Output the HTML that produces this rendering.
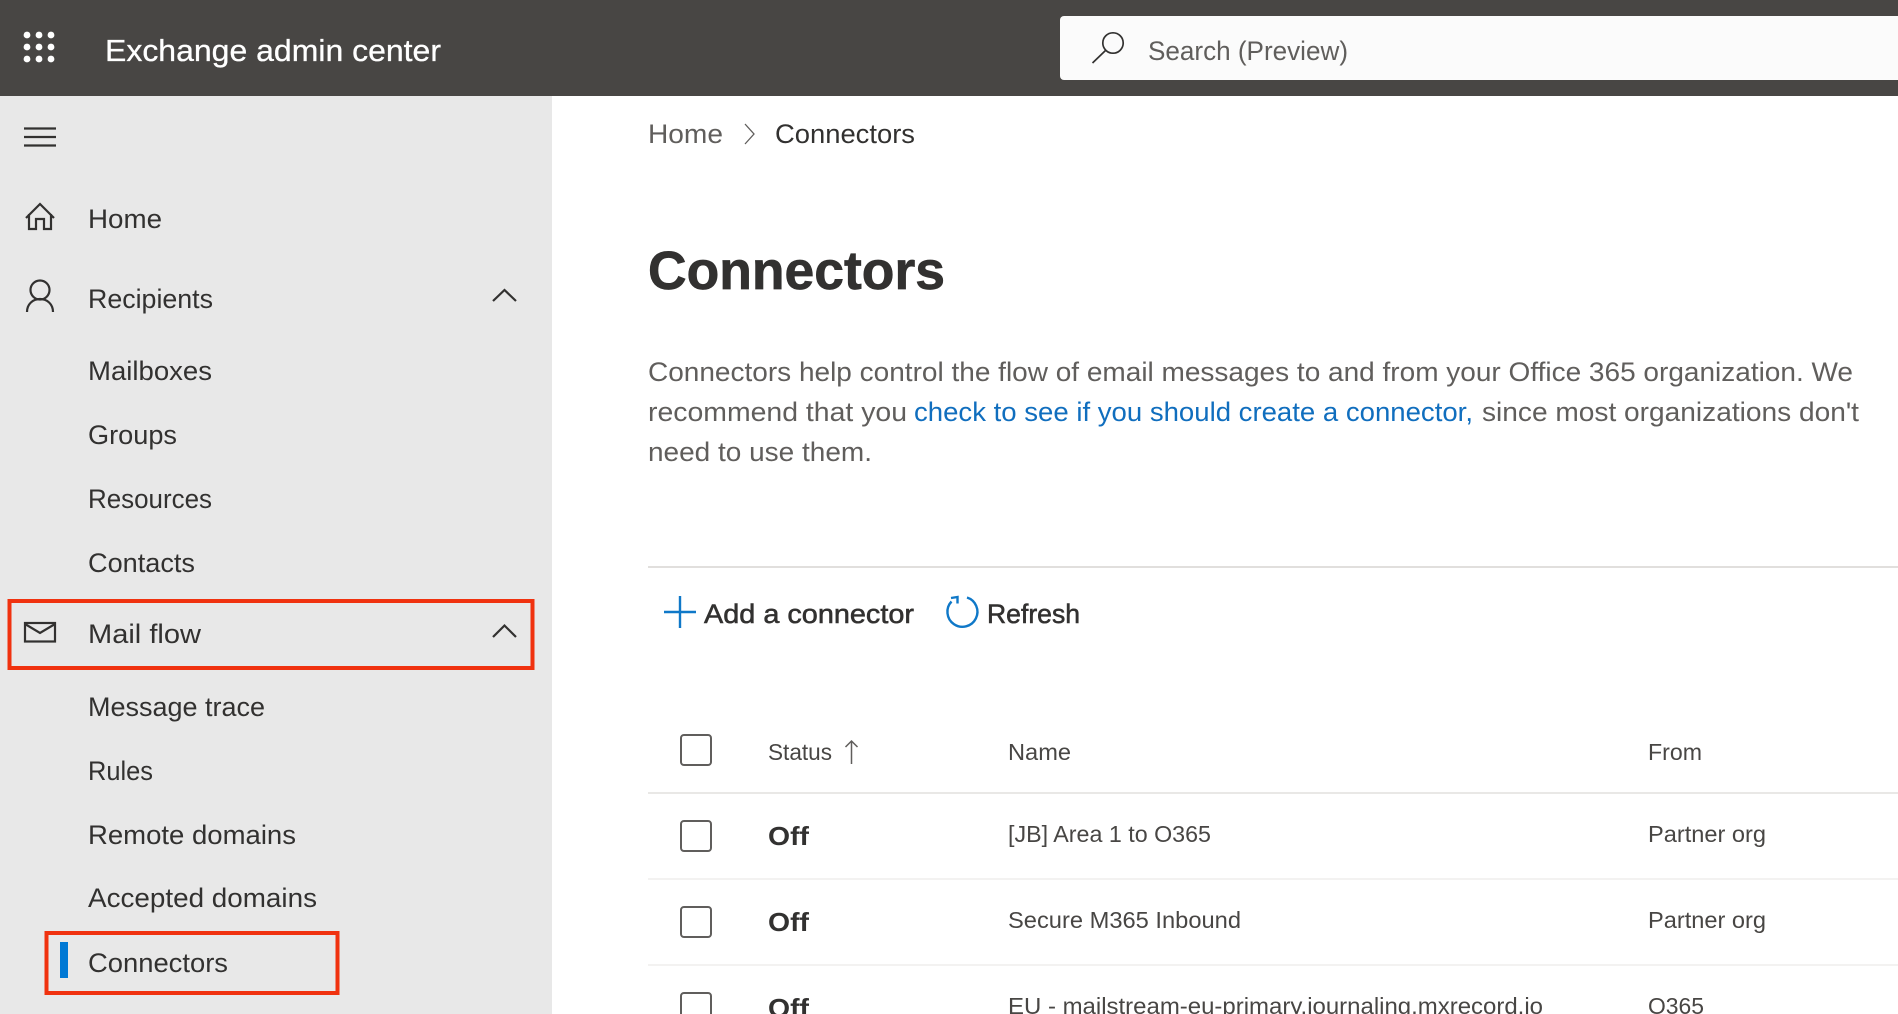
<!DOCTYPE html>
<html lang="en">
<head>
<meta charset="utf-8">
<title>Exchange admin center - Connectors</title>
<style>
html,body{margin:0;padding:0;width:1898px;height:1014px;overflow:hidden;background:#fff}
svg{display:block;position:absolute;left:0;top:0}
text{font-family:"Liberation Sans",sans-serif;white-space:pre}
.nav{font-size:27px;fill:#323130}
.p{font-size:27px;fill:#605e5c}
.l{font-size:27px;fill:#106ebe}
.t{font-size:23.5px;fill:#484644}
.h{font-size:23.5px;fill:#484644}
.off{font-size:26px;font-weight:bold;fill:#323130}
.btn{font-size:27px;fill:#323130;stroke:#323130;stroke-width:.55px}
.i{fill:none;stroke:#323130;stroke-width:2.2}
.b{fill:none;stroke:#0f78c8;stroke-width:2.4}
.cb{fill:#fff;stroke:#605e5c;stroke-width:2}
</style>
</head>
<body>
<svg width="1898" height="1014" viewBox="0 0 1898 1014" xmlns="http://www.w3.org/2000/svg">
<rect width="1898" height="1014" fill="#fff"/>
<!-- top bar -->
<rect width="1898" height="96" fill="#484644"/>
<g fill="#fff">
<circle cx="27" cy="35" r="3.4"/><circle cx="39" cy="35" r="3.4"/><circle cx="51" cy="35" r="3.4"/>
<circle cx="27" cy="47" r="3.4"/><circle cx="39" cy="47" r="3.4"/><circle cx="51" cy="47" r="3.4"/>
<circle cx="27" cy="59" r="3.4"/><circle cx="39" cy="59" r="3.4"/><circle cx="51" cy="59" r="3.4"/>
</g>
<text x="105" y="61" font-size="30.5" fill="#fff" stroke="#fff" stroke-width=".3" textLength="336" lengthAdjust="spacingAndGlyphs">Exchange admin center</text>
<path d="M1064 16H1898V80H1064A4 4 0 0 1 1060 76V20A4 4 0 0 1 1064 16Z" fill="#fbfbfb"/>
<circle cx="1113" cy="43" r="10.2" fill="none" stroke="#323130" stroke-width="1.7"/>
<path d="M1105.5 50.5L1092.500 63" fill="none" stroke="#323130" stroke-width="1.7"/>
<text x="1148" y="60" font-size="27" fill="#605e5c" textLength="200" lengthAdjust="spacingAndGlyphs">Search (Preview)</text>
<!-- sidebar -->
<rect y="96" width="552" height="918" fill="#e8e8e8"/>
<path d="M24 128.500H56M24 137H56M24 145.500H56" class="i"/>
<path d="M26 218L40 204L54 218M29 214V229H36V219H44V229H51V214" class="i"/>
<circle cx="40" cy="290" r="9.5" class="i"/>
<path d="M27 312C27 304 33 299 40 299C47 299 53 304 53 312" class="i"/>
<path d="M493 301L504.500 290L516 301" class="i"/>
<path d="M493 637L504.500 625.500L516 637" class="i"/>
<rect x="25" y="623" width="30" height="18.500" class="i"/>
<path d="M25 624L40 633L55 624" class="i"/>
<text class="nav" x="88" y="228" textLength="74" lengthAdjust="spacingAndGlyphs">Home</text>
<text class="nav" x="88" y="308" textLength="125" lengthAdjust="spacingAndGlyphs">Recipients</text>
<text class="nav" x="88" y="380" textLength="124" lengthAdjust="spacingAndGlyphs">Mailboxes</text>
<text class="nav" x="88" y="444" textLength="89" lengthAdjust="spacingAndGlyphs">Groups</text>
<text class="nav" x="88" y="508" textLength="124" lengthAdjust="spacingAndGlyphs">Resources</text>
<text class="nav" x="88" y="572" textLength="107" lengthAdjust="spacingAndGlyphs">Contacts</text>
<text class="nav" x="88" y="643" textLength="113" lengthAdjust="spacingAndGlyphs">Mail flow</text>
<text class="nav" x="88" y="716" textLength="177" lengthAdjust="spacingAndGlyphs">Message trace</text>
<text class="nav" x="88" y="780" textLength="65" lengthAdjust="spacingAndGlyphs">Rules</text>
<text class="nav" x="88" y="844" textLength="208" lengthAdjust="spacingAndGlyphs">Remote domains</text>
<text class="nav" x="88" y="907" textLength="229" lengthAdjust="spacingAndGlyphs">Accepted domains</text>
<text class="nav" x="88" y="972" textLength="140" lengthAdjust="spacingAndGlyphs">Connectors</text>
<rect x="60" y="942" width="8" height="36" fill="#0078d4"/>
<rect x="9.500" y="601" width="523" height="67" fill="none" stroke="#f0320f" stroke-width="4"/>
<rect x="46.500" y="933" width="291" height="60" fill="none" stroke="#f0320f" stroke-width="4"/>
<!-- breadcrumb -->
<text x="648" y="143" font-size="27" fill="#605e5c" textLength="75" lengthAdjust="spacingAndGlyphs">Home</text>
<path d="M745 124L754 134L745 144" fill="none" stroke="#605e5c" stroke-width="1.300"/>
<text x="775" y="143" font-size="27" fill="#323130" textLength="140" lengthAdjust="spacingAndGlyphs">Connectors</text>
<!-- heading -->
<text x="648" y="289" font-size="54" font-weight="bold" fill="#323130" stroke="#323130" stroke-width=".7" textLength="297" lengthAdjust="spacingAndGlyphs">Connectors</text>
<!-- paragraph -->
<text class="p" x="648" y="381" textLength="1205" lengthAdjust="spacingAndGlyphs">Connectors help control the flow of email messages to and from your Office 365 organization. We</text>
<text class="p" x="648" y="421" textLength="259" lengthAdjust="spacingAndGlyphs">recommend that you</text>
<text class="l" x="914" y="421" textLength="559" lengthAdjust="spacingAndGlyphs">check to see if you should create a connector,</text>
<text class="p" x="1482" y="421" textLength="377" lengthAdjust="spacingAndGlyphs">since most organizations don't</text>
<text class="p" x="648" y="461" textLength="224" lengthAdjust="spacingAndGlyphs">need to use them.</text>
<rect x="648" y="566" width="1250" height="2" fill="#e1dfdd"/>
<!-- toolbar -->
<path d="M664 612H696M680 596V628" class="b"/>
<text class="btn" x="704" y="623" textLength="210" lengthAdjust="spacingAndGlyphs">Add a connector</text>
<path d="M967 597.500A15 15 0 1 1 951.500 601.500" class="b"/>
<path d="M951 598L957.500 597L957.500 603.500" class="b"/>
<text class="btn" x="987" y="623" textLength="93" lengthAdjust="spacingAndGlyphs">Refresh</text>
<!-- table -->
<rect x="681" y="735" width="30" height="30" rx="3" class="cb"/>
<text class="h" x="768" y="760" textLength="64" lengthAdjust="spacingAndGlyphs">Status</text>
<path d="M851.500 764V741M845.500 747L851.500 741L857.500 747" fill="none" stroke="#605e5c" stroke-width="1.500"/>
<text class="h" x="1008" y="760" textLength="63" lengthAdjust="spacingAndGlyphs">Name</text>
<text class="h" x="1648" y="760" textLength="54" lengthAdjust="spacingAndGlyphs">From</text>
<rect x="648" y="792" width="1250" height="2" fill="#e9e8e6"/>
<rect x="681" y="821" width="30" height="30" rx="3" class="cb"/>
<text class="off" x="768" y="845" textLength="41" lengthAdjust="spacingAndGlyphs">Off</text>
<text class="t" x="1008" y="842" textLength="203" lengthAdjust="spacingAndGlyphs">[JB] Area 1 to O365</text>
<text class="t" x="1648" y="842" textLength="118" lengthAdjust="spacingAndGlyphs">Partner org</text>
<rect x="648" y="878" width="1250" height="2" fill="#f3f2f1"/>
<rect x="681" y="907" width="30" height="30" rx="3" class="cb"/>
<text class="off" x="768" y="931" textLength="41" lengthAdjust="spacingAndGlyphs">Off</text>
<text class="t" x="1008" y="928" textLength="233" lengthAdjust="spacingAndGlyphs">Secure M365 Inbound</text>
<text class="t" x="1648" y="928" textLength="118" lengthAdjust="spacingAndGlyphs">Partner org</text>
<rect x="648" y="964" width="1250" height="2" fill="#f3f2f1"/>
<rect x="681" y="993" width="30" height="30" rx="3" class="cb"/>
<text class="off" x="768" y="1017" textLength="41" lengthAdjust="spacingAndGlyphs">Off</text>
<text class="t" x="1008" y="1014" textLength="535" lengthAdjust="spacingAndGlyphs">EU - mailstream-eu-primary.journaling.mxrecord.io</text>
<text class="t" x="1648" y="1014" textLength="56" lengthAdjust="spacingAndGlyphs">O365</text>
</svg>
</body>
</html>
